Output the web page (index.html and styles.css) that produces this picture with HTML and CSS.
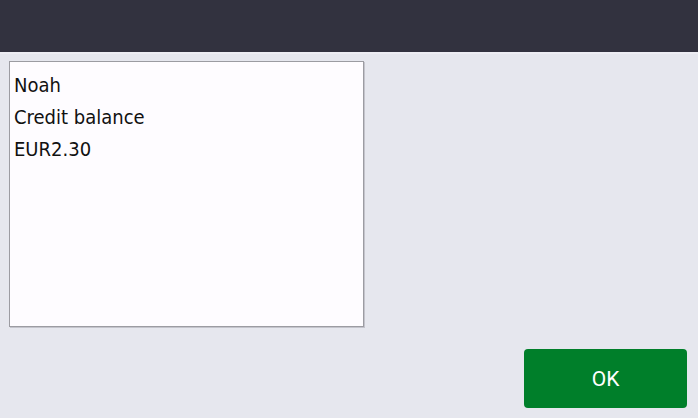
FILE: index.html
```html
<!DOCTYPE html>
<html>
<head>
<meta charset="utf-8">
<link rel="stylesheet" href="styles.css">
</head>
<body>
<div class="screen">
  <header class="topbar"></header>
  <main class="content">
    <div class="info-box">
      <div class="line">Noah</div>
      <div class="line">Credit balance</div>
      <div class="line">EUR2.30</div>
    </div>
    <div class="actions">
      <button class="ok-btn">OK</button>
    </div>
  </main>
</div>
</body>
</html>
```

FILE: styles.css
```css
html, body {
  margin: 0;
  padding: 0;
}
body {
  width: 698px;
  height: 418px;
  overflow: hidden;
  background: #e6e7ee;
}
.screen {
  display: flex;
  flex-direction: column;
  height: 418px;
}
.topbar {
  height: 52px;
  background: #32323f;
  border-bottom: 2px solid #ededf3;
  flex: none;
}
.content {
  flex: 1;
  display: flex;
  flex-direction: column;
  padding: 7px 11px 10px 9px;
}
.info-box {
  box-sizing: border-box;
  width: 355px;
  height: 266px;
  background: #fefcff;
  border: 1px solid #9c9ca2;
  box-shadow: 1px 1px 0 #c4c4cc;
  padding: 7px 0 0 4px;
  font-family: "DejaVu Sans Condensed", "DejaVu Sans", sans-serif;
  font-size: 20px;
  line-height: 32px;
  color: #111;
}
.line {
  white-space: nowrap;
}
.actions {
  margin-top: auto;
  display: flex;
  justify-content: flex-end;
}
.ok-btn {
  width: 163px;
  height: 59px;
  border: none;
  border-radius: 4px;
  background: #007f2a;
  color: #fff;
  font-family: Roboto, "Liberation Sans", sans-serif;
  font-size: 21px;
  padding: 0;
}
```
